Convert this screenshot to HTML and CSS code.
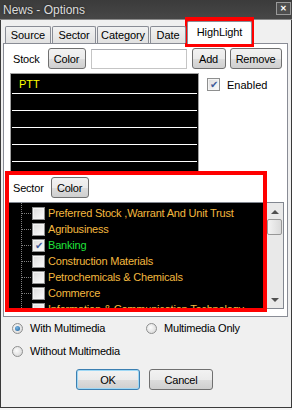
FILE: index.html
```html
<!DOCTYPE html>
<html lang="en">
<head>
    <meta charset="UTF-8">
    <title>News - Options</title>
    <link rel="stylesheet" href="styles.css">
</head>
<body>
    <div class="window">
        <div class="titlebar">
            <span class="title">News - Options</span>
            <span class="close">&#x2715;</span>
        </div>
        <div class="client">
            <div class="tabs">
                <div class="tab tab-source">Source</div>
                <div class="tab tab-sector">Sector</div>
                <div class="tab tab-category">Category</div>
                <div class="tab tab-date">Date</div>
                <div class="tab tab-highlight active">HighLight</div>
            </div>
            <div class="panel">
                <div class="stock-row">
                    <span class="label">Stock</span>
                    <button class="btn btn-color">Color</button>
                    <input class="textbox" type="text">
                    <button class="btn btn-add">Add</button>
                    <button class="btn btn-remove">Remove</button>
                </div>
                <div class="stock-body">
                    <div class="stock-list">
                        <div class="row first">PTT</div>
                        <div class="row"></div>
                        <div class="row"></div>
                        <div class="row"></div>
                        <div class="row"></div>
                        <div class="row"></div>
                    </div>
                    <div class="check-line">
                        <span class="box checked">&#x2714;</span>
                        <span>Enabled</span>
                    </div>
                </div>
                <div class="sector-row">
                    <span class="label">Sector</span>
                    <button class="btn btn-color">Color</button>
                </div>
                <div class="tree">
                    <div class="tree-items">
                        <div class="item"><span class="box"></span>Preferred Stock ,Warrant And Unit Trust</div>
                        <div class="item"><span class="box"></span>Agribusiness</div>
                        <div class="item green"><span class="box checked">&#x2714;</span>Banking</div>
                        <div class="item"><span class="box"></span>Construction Materials</div>
                        <div class="item"><span class="box"></span>Petrochemicals &amp; Chemicals</div>
                        <div class="item"><span class="box"></span>Commerce</div>
                        <div class="item"><span class="box"></span>Information &amp; Communication Technology</div>
                    </div>
                    <div class="scrollbar">
                        <span class="arrow up"></span>
                        <span class="thumb"></span>
                        <span class="arrow down"></span>
                    </div>
                </div>
            </div>
            <div class="radios">
                <div class="radio-line"><span class="radio on"></span>With Multimedia</div>
                <div class="radio-line"><span class="radio"></span>Multimedia Only</div>
                <div class="radio-line"><span class="radio"></span>Without Multimedia</div>
            </div>
            <div class="actions">
                <button class="btn btn-big btn-default">OK</button>
                <button class="btn btn-big">Cancel</button>
            </div>
        </div>
        <!-- red annotation boxes -->
        <div class="mark mark-tab"></div>
        <div class="mark mark-sector"></div>
    </div>
</body>
</html>
```

FILE: styles.css
```css
body {
    margin: 0;
    background: #f4f4f4;
    font-family: "Liberation Sans", Arial, sans-serif;
    font-size: 11px;
    color: #000;
}
.window {
    position: relative;
    width: 292px;
    height: 408px;
    box-sizing: border-box;
    background: #f0f0f0;
    border: 1px solid #3a3a3a;
    border-top: 0;
    display: flex;
    flex-direction: column;
}
.titlebar {
    height: 19px;
    background: linear-gradient(#3b3b3b, #474747);
    border-bottom: 1px solid #8a8a8a;
    display: flex;
    align-items: center;
    justify-content: space-between;
    padding: 0 1px 0 3px;
    margin: 0 -1px;
}
.title {
    font-size: 12px;
    color: #dcdcdc;
    text-shadow: 0 0 3px rgba(0, 0, 0, 0.6);
}
.close {
    width: 13px;
    height: 11px;
    border: 1px solid #9a9a9a;
    background: #4e4e4e;
    color: #fff;
    font-size: 8px;
    font-weight: bold;
    line-height: 11px;
    text-align: center;
    margin-bottom: 2px;
}
.client {
    flex: 1;
    display: flex;
    flex-direction: column;
    padding: 0 3px 0 2px;
}
.tabs {
    height: 23px;
    display: flex;
    align-items: flex-end;
    padding-left: 2px;
    position: relative;
    z-index: 1;
}
.tab {
    height: 17px;
    line-height: 17px;
    box-sizing: border-box;
    margin-right: 1px;
    border: 1px solid #898c95;
    border-bottom: 0;
    border-radius: 2px 2px 0 0;
    background: linear-gradient(#f2f2f2, #e1e1e1);
    text-align: center;
    letter-spacing: -0.1px;
}
.tab-source { width: 46px; }
.tab-sector { width: 44px; }
.tab-category { width: 52px; }
.tab-date { width: 36px; }
.tab.active {
    width: 65px;
    height: 23px;
    line-height: 21px;
    margin-bottom: -1px;
    background: #fff;
}
.panel {
    background: #fff;
    border: 1px solid #898c95;
    height: 268px;
    padding: 4px 3px 0 0;
    display: flex;
    flex-direction: column;
}
.label {
    letter-spacing: -0.2px;
}
.btn {
    font-family: "Liberation Sans", Arial, sans-serif;
    font-size: 11px;
    height: 21px;
    padding: 0;
    border: 1px solid #707070;
    border-radius: 3px;
    background: linear-gradient(#f2f2f2 0%, #ebebeb 50%, #dddddd 51%, #cfcfcf 100%);
    color: #000;
    letter-spacing: -0.2px;
}
.stock-row {
    display: flex;
    align-items: center;
    padding-left: 9px;
    height: 21px;
}
.stock-row .btn-color {
    width: 38px;
    margin-left: 8px;
}
.textbox {
    width: 96px;
    height: 20px;
    box-sizing: border-box;
    border: 1px solid #c5c5c5;
    border-top-color: #abadb3;
    margin-left: 5px;
}
.btn-add {
    width: 34px;
    margin-left: 5px;
}
.btn-remove {
    width: 52px;
    margin-left: 4px;
}
.stock-body {
    display: flex;
    margin-top: 4px;
    padding-left: 6px;
}
.stock-list {
    width: 189px;
    height: 100px;
    box-sizing: border-box;
    background: #000;
    border: 1px solid #a0a0a0;
    overflow: hidden;
    padding: 0 1px;
}
.row {
    height: 16px;
    border-bottom: 1px solid #fff;
    color: #ffff00;
    padding-left: 7px;
    line-height: 16px;
}
.row.first {
    height: 19px;
    line-height: 20px;
}
.check-line {
    display: flex;
    align-items: center;
    height: 13px;
    margin: 5px 0 0 8px;
    gap: 7px;
}
.box {
    width: 11px;
    height: 11px;
    border: 1px solid #8e8f8f;
    background: linear-gradient(135deg, #dcdcdc, #fbfbfb);
    box-shadow: inset 0 0 0 1px #f4f4f4;
    display: inline-flex;
    align-items: center;
    justify-content: center;
    font-size: 10px;
    color: #3d5a98;
    flex-shrink: 0;
}
.sector-row {
    display: flex;
    align-items: center;
    padding-left: 9px;
    margin-top: 4px;
    height: 21px;
}
.sector-row .btn-color {
    width: 38px;
    margin-left: 7px;
}
.tree {
    margin: 4px 0 0 4px;
    height: 107px;
    box-sizing: border-box;
    border: 1px solid #828790;
    display: flex;
    overflow: hidden;
}
.tree-items {
    flex: 1;
    padding-top: 2px;
    background-image: linear-gradient(to bottom, #808080 50%, transparent 50%);
    background-size: 1px 2px;
    background-repeat: repeat-y;
    background-position: 12px 0;
    background-color: #000;
}
.item {
    height: 16px;
    display: flex;
    align-items: center;
    color: #f3b83f;
    white-space: nowrap;
    letter-spacing: -0.2px;
    padding-left: 23px;
    position: relative;
}
.item::before {
    content: "";
    position: absolute;
    left: 13px;
    top: 8px;
    width: 9px;
    border-top: 1px dotted #808080;
}
.item .box {
    margin-right: 3px;
}
.item.green {
    color: #1fe23a;
}
.scrollbar {
    width: 17px;
    background: #e9e9e9;
    border-left: 1px solid #d4d4d4;
    display: flex;
    flex-direction: column;
    align-items: center;
}
.arrow {
    width: 0;
    height: 0;
    border-left: 4px solid transparent;
    border-right: 4px solid transparent;
}
.arrow.up {
    border-bottom: 4px solid #505050;
    margin-top: 7px;
}
.arrow.down {
    border-top: 4px solid #505050;
    margin-top: auto;
    margin-bottom: 6px;
}
.thumb {
    width: 13px;
    height: 14px;
    margin-top: 5px;
    border: 1px solid #979797;
    border-radius: 2px;
    background: linear-gradient(to right, #f3f3f3, #dadada);
}
.radios {
    display: grid;
    grid-template-columns: 134px 1fr;
    row-gap: 11px;
    padding: 5px 0 0 9px;
}
.radio-line {
    display: flex;
    align-items: center;
    gap: 7px;
    height: 12px;
    letter-spacing: -0.2px;
}
.radio {
    width: 11px;
    height: 11px;
    border-radius: 50%;
    border: 1px solid #8e8f8f;
    background: radial-gradient(circle at 40% 40%, #fcfcfc, #d2d2d2);
    box-sizing: border-box;
    position: relative;
}
.radio.on::after {
    content: "";
    position: absolute;
    left: 2px;
    top: 2px;
    width: 5px;
    height: 5px;
    border-radius: 50%;
    background: radial-gradient(circle at 40% 35%, #7ab6e4, #1b5e97);
}
.actions {
    display: flex;
    justify-content: center;
    gap: 9px;
    margin-top: 12px;
    padding-right: 2px;
}
.btn-big {
    width: 64px;
    height: 21px;
}
.btn-default {
    border-color: #3c7fb1;
    box-shadow: inset 0 0 0 1px #9fd8f5;
}
.mark {
    position: absolute;
    border: 4px solid #ff0000;
    box-sizing: border-box;
}
.mark-tab {
    left: 184px;
    top: 17px;
    width: 69px;
    height: 30px;
}
.mark-sector {
    left: 4px;
    top: 171px;
    width: 262px;
    height: 141px;
}
```
